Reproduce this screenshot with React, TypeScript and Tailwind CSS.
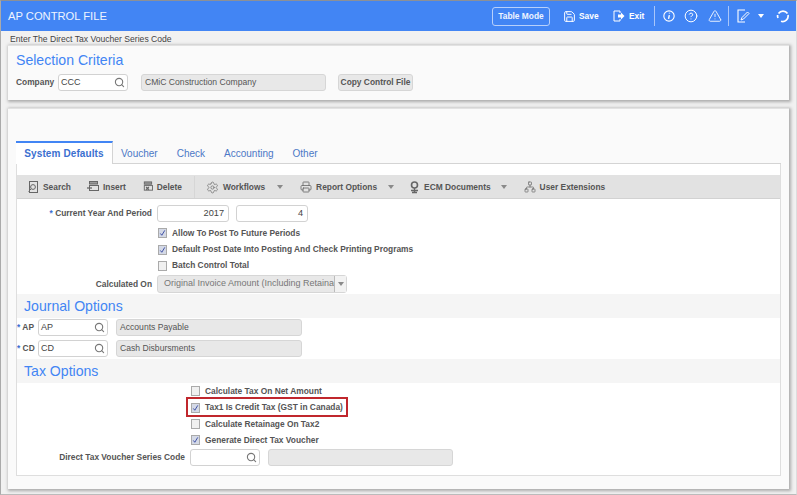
import React from "react";
import { Search, Save, HelpCircle, TriangleAlert, Printer, Network, Settings } from "lucide-react";

const F = "font-['Liberation_Sans',Arial,sans-serif]";
const Lookup = ({ w, v }: { w: string; v?: string }) => (
  <div className={`${w} h-[17px] bg-white border border-[#d2d2d2] rounded-[3px] flex items-center justify-between pl-[2px] pr-[2px] text-[9px] font-normal text-[#444]`}>
    <span>{v}</span>
    <Search size={11} strokeWidth={2.4} className="text-[#777]" />
  </div>
);
const RO = ({ w, v }: { w: string; v?: string }) => (
  <div className={`${w} h-[17px] bg-[#e8e8e8] border border-[#d6d6d6] rounded-[3px] flex items-center pl-[3px] text-[8.6px] font-normal text-[#555]`}>{v}</div>
);
const Num = ({ v }: { v: string }) => (
  <div className="w-[72px] h-[17px] bg-white border border-[#d2d2d2] rounded-[3px] flex items-center justify-end pr-[4px] text-[9.2px] text-[#444]">{v}</div>
);
const Check = ({ on }: { on?: boolean }) => (
  <div className={`w-[9px] h-[10px] border border-[#aaa] ${on ? "bg-[#d4d9e6]" : "bg-[#f0f0f0]"} flex items-center justify-center shrink-0`}>
    {on && (
      <svg width="8" height="8" viewBox="0 0 8 8"><path d="M1.5 4.5 L3.2 6.6 L6.6 1" fill="none" stroke="#2b3f9e" strokeWidth="1" /></svg>
    )}
  </div>
);
const CheckRow = ({ ml, on, t, h }: { ml: string; on?: boolean; t: string; h: string }) => (
  <div className={`flex items-center gap-[5px] ${ml} ${h} font-bold text-[8.4px] text-[#555]`}>
    <Check on={on} />
    <span className="whitespace-nowrap">{t}</span>
  </div>
);
const Caret = ({ ml }: { ml: string }) => <div className={`${ml} w-0 h-0 border-l-[3.5px] border-r-[3.5px] border-t-[4px] border-l-transparent border-r-transparent border-t-[#8a8a8a]`} />;

const Tool = ({ ml, icon, t }: { ml: string; icon: React.ReactNode; t: string }) => (
  <div className={`flex items-center gap-[4px] ${ml} whitespace-nowrap`}>
    {icon}
    <span>{t}</span>
  </div>
);
const DocIcon = () => (
  <svg width="11" height="12" viewBox="0 0 11 12" fill="none" stroke="#666"><rect x="1.5" y="0.5" width="8" height="11" /><circle cx="5" cy="6" r="2.4" /><path d="M3 8 L0.5 10.5" /></svg>
);
const RowIcon = ({ d, w }: { d: string; w: string }) => (
  <svg width={w} height="11" viewBox="0 0 12 11" fill="none" stroke="#666"><rect x="2.5" y="0.5" width="8" height="2.5" fill="#999" /><rect x="2.5" y="4.5" width="9" height="5" /><path d={d} strokeWidth="1.3" /></svg>
);
const Ecm = () => (
  <svg width="11" height="13" viewBox="0 0 11 13" fill="none" stroke="#666"><circle cx="5.5" cy="4" r="3" strokeWidth="1.6" /><path d="M5.5 7 V12 M2 9.5 H9 M3 11.5 H8" strokeWidth="1.3" /></svg>
);

export default function App() {
  return (
    <div className={`${F} w-[797px] h-[495px] bg-[#f1f1f1] border-t border-l border-r border-b border-t-[#8c9097] border-l-[#aaa] border-r-[#ddd] border-b-[#bbb] flex flex-col overflow-hidden`}>
      <header className="h-[30px] shrink-0 bg-[#4285f4] flex items-center text-white">
        <div className="ml-[7px] pt-[1px] text-[11.2px] text-[#eef4ff]">AP CONTROL FILE</div>
        <div className="ml-auto flex items-center">
          <div className="w-[58px] h-[19px] border border-[#b7d0fb] rounded-[3px] flex items-center justify-center text-[8.4px] font-bold text-[#eef4ff]">Table Mode</div>
          <Save size={13} strokeWidth={1.8} className="ml-[13px]" />
          <span className="ml-[3px] w-[19px] text-[8.4px] font-bold">Save</span>
          <svg width="12" height="12" viewBox="0 0 12 12" className="ml-[15px]" fill="none" stroke="white"><path d="M7 3 V1 H1 V11 H7 V9" /><path d="M5 4.5 H8 V2.5 L11.5 6 L8 9.5 V7.5 H5 Z" fill="white" stroke="none" /></svg>
          <span className="ml-[4px] w-[14px] text-[8.4px] font-bold">Exit</span>
          <div className="ml-[11px] w-px h-[20px] bg-[#a9c6fa]" />
          <svg width="12" height="12" viewBox="0 0 13 13" className="ml-[8px]" fill="none" stroke="white"><circle cx="6.5" cy="6.5" r="5.6" strokeWidth="1.2" /><path d="M7 3 V3.8 M6.9 5.6 L6 9.6" strokeWidth="1.5" /></svg>
          <HelpCircle size={14} strokeWidth={1.7} className="ml-[9px]" />
          <TriangleAlert size={14} strokeWidth={1.5} className="ml-[10px]" />
          <div className="ml-[6px] w-px h-[20px] bg-[#a9c6fa]" />
          <svg width="13" height="14" viewBox="0 0 13 14" className="ml-[8px]" fill="none" stroke="white"><path d="M8 1 H1 V13 H8" strokeWidth="1.1" /><path d="M4 11 L5 8.5 L10.5 3 L12 4.5 L6.5 10 Z" strokeWidth="1" /></svg>
          <div className="ml-[8px] w-0 h-0 border-l-[3.5px] border-r-[3.5px] border-t-[4.5px] border-l-transparent border-r-transparent border-t-white" />
          <svg width="14" height="14" viewBox="0 0 14 14" className="ml-[12px] mr-[6px]" fill="none" stroke="white" strokeWidth="1.7"><path d="M2.5 4.5 A5.5 5.5 0 0 1 11.5 4.5" /><path d="M12 6 A5.5 5.5 0 0 1 5 12.3" /><path d="M2 9 A5.5 5.5 0 0 1 1.6 6" /></svg>
        </div>
      </header>

      <div className="h-[14px] shrink-0 pl-[9px] pt-[2px] text-[8.6px] leading-[12px] text-[#444]">Enter The Direct Tax Voucher Series Code</div>

      <section className="mx-[7px] h-[55px] shrink-0 bg-[#fafafa] border-t border-[#e2e2e2] shadow-[1px_1px_3px_1px_#aaa] pl-[8px] pt-[6px]">
        <h2 className="text-[14.1px] leading-[17px] text-[#4285f4]">Selection Criteria</h2>
        <div className="mt-[5px] flex items-center">
          <span className="text-[8.4px] font-bold text-[#555] w-[42px]">Company</span>
          <Lookup w="w-[70px]" v="CCC" />
          <div className="w-[13px]" />
          <RO w="w-[185px]" v="CMiC Construction Company" />
          <div className="w-[12px]" />
          <div className="w-[75px] h-[17px] bg-[#e8e8e8] border border-[#d6d6d6] rounded-[3px] flex items-center justify-center whitespace-nowrap text-[8.4px] font-bold text-[#555]">Copy Control File</div>
        </div>
      </section>

      <section className="mt-[8px] mx-[7px] h-[381px] shrink-0 bg-[#fafafa] border-t border-[#e2e2e2] shadow-[1px_1px_3px_1px_#aaa] px-[8px] pb-[13px] flex flex-col">
        <nav className="mt-[32px] h-[23px] shrink-0 flex text-[10px] text-[#4c78c6]">
          <div className="w-[97px] bg-white border-t-2 border-t-[#4285f4] border-r border-r-[#d4d4d4] flex items-center justify-center font-bold text-[#3b6fd0] tracking-[0.1px]">System Defaults</div>
          <div className="flex-1 pt-[2px] border-b border-[#d4d4d4] flex items-center">
            <span className="ml-[8px]">Voucher</span>
            <span className="ml-[19px]">Check</span>
            <span className="ml-[19px]">Accounting</span>
            <span className="ml-[19px]">Other</span>
          </div>
        </nav>
        <div className="flex-1 min-h-0 bg-white border-l border-r border-b border-[#dedede] flex flex-col">
          <div className="mt-[11px] h-[24px] pt-[1px] shrink-0 bg-[#e2e2e2] border-b border-[#d2d2d2] flex items-center text-[8.4px] font-bold text-[#555]">
            <Tool ml="ml-[11px]" icon={<DocIcon />} t="Search" />
            <Tool ml="ml-[16px]" icon={<RowIcon w="12" d="M0 7 H5" />} t="Insert" />
            <Tool ml="ml-[16px]" icon={<RowIcon w="11" d="M4.5 6 L7.5 9 M7.5 6 L4.5 9" />} t="Delete" />
            <div className="ml-[12px] w-px h-[22px] bg-[#d6d6d6]" />
            <Tool ml="ml-[11px]" icon={<Settings size={13} strokeWidth={1.5} className="text-[#777]" />} t="Workflows" />
            <Caret ml="ml-[12px]" />
            <Tool ml="ml-[17px]" icon={<Printer size={12} strokeWidth={1.6} className="text-[#666]" />} t="Report Options" />
            <Caret ml="ml-[11px]" />
            <Tool ml="ml-[15px]" icon={<Ecm />} t="ECM Documents" />
            <Caret ml="ml-[10px]" />
            <Tool ml="ml-[17px]" icon={<Network size={12} strokeWidth={1.4} className="text-[#666]" />} t="User Extensions" />
          </div>

          <div className="mt-[6px] flex items-center h-[17px] shrink-0">
            <div className="w-[135px] text-right text-[8.4px] font-bold text-[#555]"><span className="text-[#3b6fd0]">* </span>Current Year And Period</div>
            <div className="ml-[5px]"><Num v="2017" /></div>
            <div className="ml-[7px]"><Num v="4" /></div>
          </div>
          <div className="h-[3px] shrink-0" />
          <CheckRow ml="ml-[141px]" on t="Allow To Post To Future Periods" h="h-[16px] shrink-0" />
          <CheckRow ml="ml-[141px]" on t="Default Post Date Into Posting And Check Printing Programs" h="h-[17px] shrink-0" />
          <CheckRow ml="ml-[141px]" t="Batch Control Total" h="h-[15px] shrink-0" />
          <div className="mt-[2px] flex items-center h-[18px] shrink-0">
            <div className="w-[135px] text-right text-[8.4px] font-bold text-[#555]">Calculated On</div>
            <div className="ml-[5px] w-[190px] h-[18px] bg-[#e8e8e8] border border-[#d6d6d6] rounded-[3px] flex items-center text-[9px] text-[#777]">
              <span className="flex-1 pl-[6px] overflow-hidden whitespace-nowrap">Original Invoice Amount (Including Retainage)</span>
              <div className="w-[12px] h-[16px] bg-[#f2f2f2] border-l border-[#bbb] flex items-center justify-center shrink-0"><Caret ml="ml-0" /></div>
            </div>
          </div>

          <div className="mt-[1px] h-[24px] pt-[1px] shrink-0 bg-[#f5f5f5] pl-[7px] flex items-center text-[14.1px] text-[#4285f4]">Journal Options</div>
          <div className="mt-[1px] flex items-center h-[17px] shrink-0 text-[8.4px] font-bold text-[#555]">
            <span className="w-[17px] text-right whitespace-nowrap"><span className="text-[#3b6fd0]">*</span> AP</span>
            <div className="ml-[4px]"><Lookup w="w-[70px]" v="AP" /></div>
            <div className="ml-[8px]"><RO w="w-[186px]" v="Accounts Payable" /></div>
          </div>
          <div className="mt-[4px] flex items-center h-[17px] shrink-0 text-[8.4px] font-bold text-[#555]">
            <span className="w-[17px] text-right whitespace-nowrap"><span className="text-[#3b6fd0]">*</span> CD</span>
            <div className="ml-[4px]"><Lookup w="w-[70px]" v="CD" /></div>
            <div className="ml-[8px]"><RO w="w-[186px]" v="Cash Disbursments" /></div>
          </div>
          <div className="mt-[2px] h-[24px] pt-[1px] shrink-0 bg-[#f5f5f5] pl-[7px] flex items-center text-[14.1px] text-[#4285f4]">Tax Options</div>
          <CheckRow ml="ml-[174px]" t="Calculate Tax On Net Amount" h="h-[16px] shrink-0" />
          <div className="relative shrink-0">
            <CheckRow ml="ml-[174px]" on t="Tax1 Is Credit Tax (GST in Canada)" h="h-[17px]" />
            <div className="absolute left-[169px] top-[-2px] w-[162px] h-[20px] border-2 border-[#c0272d]" />
          </div>
          <CheckRow ml="ml-[174px]" t="Calculate Retainage On Tax2" h="h-[16px] shrink-0" />
          <CheckRow ml="ml-[174px]" on t="Generate Direct Tax Voucher" h="h-[16px] shrink-0" />
          <div className="flex items-center h-[17px] shrink-0 mt-[1px]">
            <div className="w-[168px] text-right text-[8.4px] font-bold text-[#555]">Direct Tax Voucher Series Code</div>
            <div className="ml-[5px]"><Lookup w="w-[70px]" /></div>
            <div className="ml-[8px]"><RO w="w-[185px]" /></div>
          </div>
        </div>
      </section>
    </div>
  );
}
